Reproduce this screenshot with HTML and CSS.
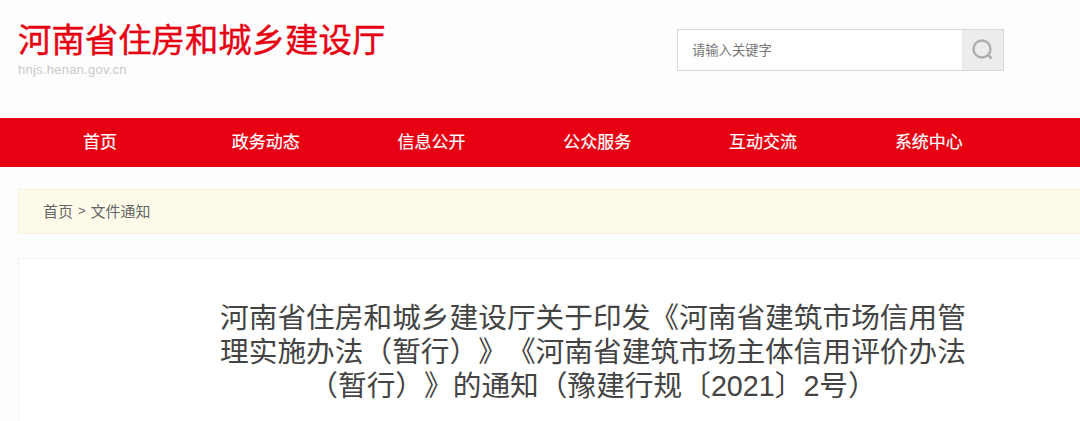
FILE: index.html
```html
<!DOCTYPE html>
<html lang="zh-CN">

<head>
    <meta charset="UTF-8">
    <title>河南省住房和城乡建设厅</title>
    <link rel="stylesheet" href="styles.css">
</head>

<body>

    <div class="header">
        <div class="logo">
            <div class="logo-name">河南省住房和城乡建设厅</div>
            <div class="logo-url">hnjs.henan.gov.cn</div>
        </div>
        <div class="search">
            <span class="search-text">请输入关键字</span>
            <span class="search-btn">
                <svg width="24" height="24" viewBox="0 0 24 24" fill="none" stroke="#adadad">
                    <circle cx="11" cy="11" r="8.5" stroke-width="2.4"></circle>
                    <path d="M17.500 17.500l3 3" stroke-width="3"></path>
                </svg>
            </span>
        </div>
    </div>

    <ul class="nav">
        <li>首页</li>
        <li>政务动态</li>
        <li>信息公开</li>
        <li>公众服务</li>
        <li>互动交流</li>
        <li>系统中心</li>
    </ul>

    <div class="crumb">
        <span>首页</span>
        <span class="crumb-sep">&gt;</span>
        <span>文件通知</span>
    </div>

    <div class="card">
        <h1>河南省住房和城乡建设厅关于印发《河南省建筑市场信用管理实施办法（暂行）》《河南省建筑市场主体信用评价办法（暂行）》的通知（豫建行规〔2021〕2号）</h1>
    </div>

</body>

</html>
```

FILE: styles.css
```css
* {
    margin: 0;
    padding: 0;
    box-sizing: border-box;
}

html,
body {
    height: 421px;
    overflow: hidden;
}

body {
    background: #fdfdfd;
    font-family: "Liberation Sans", "Noto Sans CJK SC", sans-serif;
    text-spacing-trim: space-all;
}

.header {
    display: flex;
    justify-content: space-between;
    height: 118px;
    padding: 21px 76px 0 18px;
}

.logo-name {
    font-size: 33.4px;
    line-height: 40px;
    color: #e60012;
    -webkit-text-stroke: 0.4px #e60012;
}

.logo-url {
    margin-top: 1px;
    font-size: 13px;
    letter-spacing: 0.25px;
    line-height: 16px;
    color: #c9c9c9;
}

.search {
    display: flex;
    justify-content: space-between;
    align-items: center;
    width: 327px;
    height: 42px;
    margin-top: 8px;
    background: #fff;
    border: 1px solid #d9d9d9;
}

.search-text {
    padding-left: 14px;
    padding-bottom: 1px;
    font-size: 13.3px;
    color: #777;
}

.search-btn {
    display: flex;
    justify-content: center;
    align-items: center;
    width: 41px;
    height: 40px;
    background: #ececec;
}

.nav {
    display: grid;
    grid-template-columns: repeat(6, 165.8px);
    height: 49px;
    padding-left: 17px;
    background: #e60012;
    list-style: none;
}

.nav li {
    font-size: 17px;
    line-height: 49px;
    text-align: center;
    color: #fff;
    -webkit-text-stroke: 0.2px #fff;
}

.crumb {
    display: flex;
    align-items: center;
    gap: 5px;
    height: 45px;
    margin: 22px -20px 0 18px;
    padding: 0 0 3px 24px;
    background: #fefaea;
    border: 1px solid #f8f2dc;
    font-size: 15px;
    color: #666;
}

.crumb-sep {
    font-size: 13px;
}

.card {
    height: 163px;
    margin: 24px -20px 0 18px;
    padding: 42px 130px 0 198px;
    background: #fff;
    border: 1px solid #f3f3f3;
    border-bottom: none;
}

.card h1 {
    font-size: 28.7px;
    font-weight: normal;
    line-height: 34px;
    text-align: center;
    color: #444;
}
```
